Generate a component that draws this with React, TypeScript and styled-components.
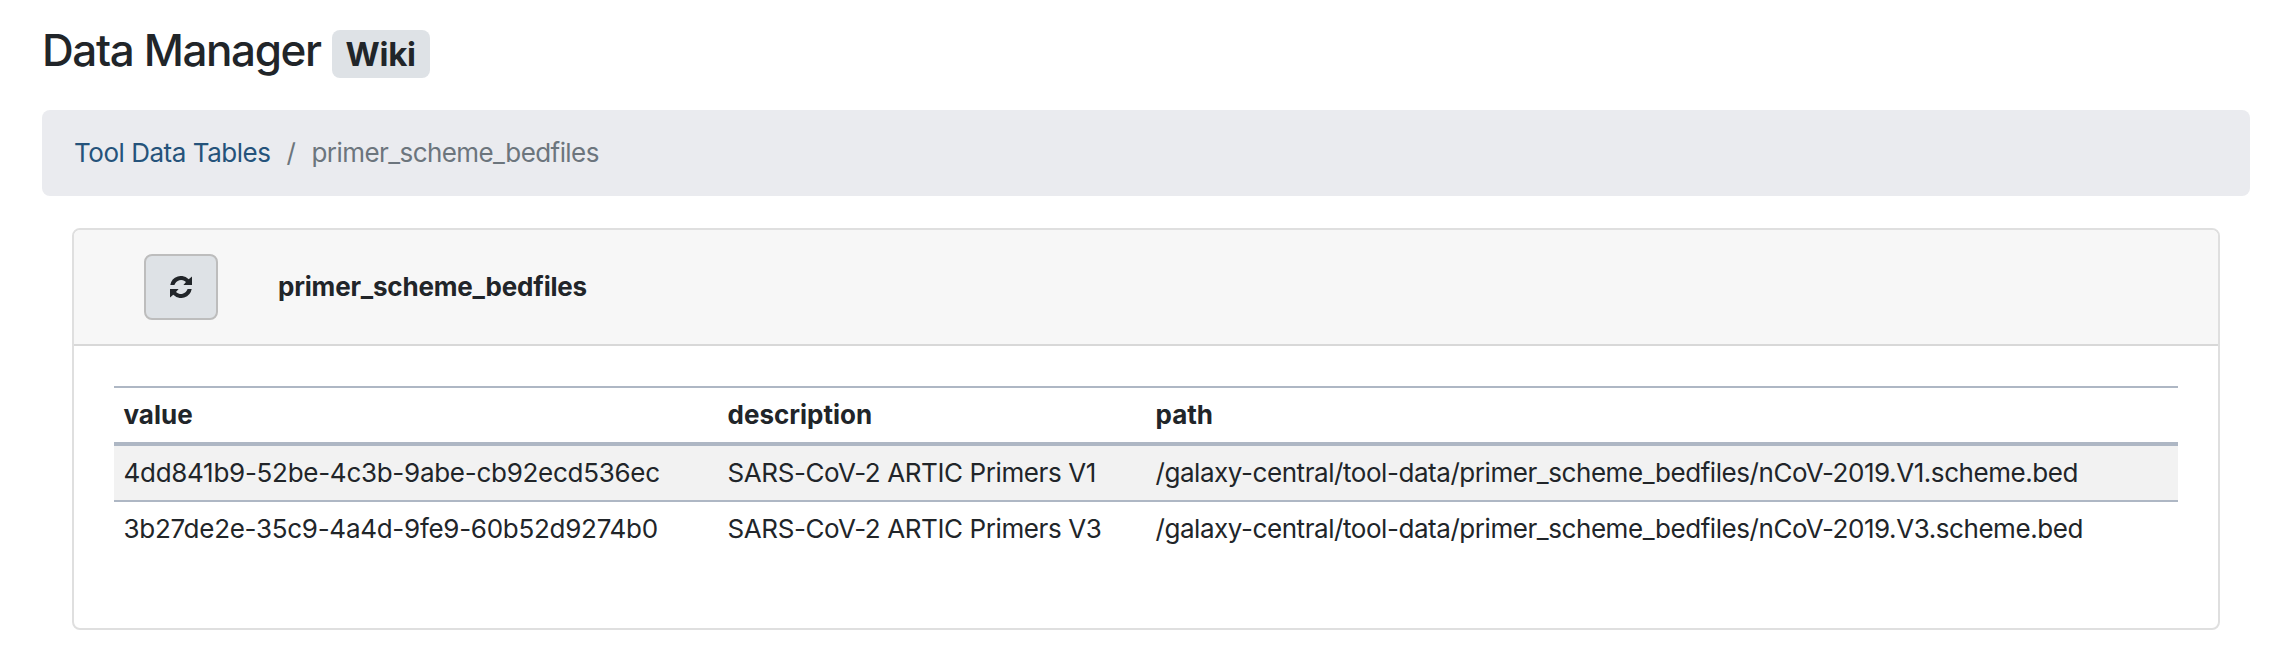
import React from "react";
import styled, { createGlobalStyle } from "styled-components";

const GlobalStyle = createGlobalStyle`
  *, *::before, *::after { box-sizing: border-box; }
  body {
    margin: 0;
    background: #fff;
    color: #212529;
    font-family: Inter, "Liberation Sans", sans-serif;
    font-size: 26px;
    line-height: 38px;
    letter-spacing: -0.4px;
  }
`;

const Page = styled.main`
  padding: 23px 30px 0 42px;
`;

const Heading = styled.h1`
  display: flex;
  align-items: baseline;
  gap: 11px;
  height: 54px;
  margin: 0 0 33px;
  font-size: 44px;
  font-weight: 500;
  line-height: 54px;
  letter-spacing: -1.4px;
  white-space: nowrap;
`;

const WikiBadge = styled.a`
  height: 48px;
  padding: 7px 14px 0;
  border-radius: 8px;
  background: #dee2e6;
  font-size: 33px;
  font-weight: 700;
  line-height: 34px;
  letter-spacing: -0.3px;
`;

const Breadcrumb = styled.nav`
  display: flex;
  align-items: center;
  height: 86px;
  margin-bottom: 32px;
  padding: 0 32px;
  border-radius: 8px;
  background: #eaebef;
  color: #6c757d;
`;

const CrumbLink = styled.a`
  color: #25537b;
  letter-spacing: -0.47px;
`;

const Separator = styled.span`
  padding: 0 16px;
`;

const CurrentCrumb = styled.span`
  letter-spacing: -0.57px;
`;

const Card = styled.section`
  height: 402px;
  margin: 0 30px;
  border: 2px solid #dfdfdf;
  border-radius: 8px;
  overflow: hidden;
`;

const CardHeader = styled.header`
  display: flex;
  align-items: center;
  gap: 60px;
  height: 116px;
  padding: 0 70px;
  border-bottom: 2px solid #d8d8d8;
  background: #f7f7f7;
`;

const RefreshButton = styled.button`
  display: flex;
  align-items: center;
  justify-content: center;
  width: 74px;
  height: 66px;
  padding: 0;
  border: 2px solid #bdbdbd;
  border-radius: 8px;
  background: #dee2e6;
  color: #212529;
`;

const RefreshIcon = styled.svg`
  display: block;
  width: 22px;
  height: 22px;
  fill: currentColor;
`;

const CardTitle = styled.b`
  font-weight: 700;
  letter-spacing: -0.2px;
`;

const Table = styled.table`
  width: 2064px;
  margin: 40px 40px 0;
  border-collapse: separate;
  border-spacing: 0;
  table-layout: fixed;
`;

const Column = styled.col<{ $width: number }>`
  width: ${({ $width }) => $width}px;
`;

const HeaderCell = styled.th`
  height: 60px;
  padding: 0 9.5px;
  border-top: 2px solid #aeb7c4;
  border-bottom: 4px solid #aeb7c4;
  font-weight: 700;
  letter-spacing: 0;
  text-align: left;
`;

const Row = styled.tr<{ $striped: boolean }>`
  background: ${({ $striped }) => ($striped ? "#f2f2f2" : "transparent")};
`;

const Cell = styled.td<{ $tracking: number }>`
  height: 54px;
  padding: 0 9.5px;
  letter-spacing: ${({ $tracking }) => $tracking}px;
  white-space: nowrap;

  tr + tr > & {
    height: 56px;
    border-top: 2px solid #aeb7c4;
  }
`;

const columns = [
  { name: "value", width: 604, tracking: -0.28 },
  { name: "description", width: 428, tracking: -0.4 },
  { name: "path", width: 1032, tracking: -0.44 },
];

const rows = [
  [
    "4dd841b9-52be-4c3b-9abe-cb92ecd536ec",
    "SARS-CoV-2 ARTIC Primers V1",
    "/galaxy-central/tool-data/primer_scheme_bedfiles/nCoV-2019.V1.scheme.bed",
  ],
  [
    "3b27de2e-35c9-4a4d-9fe9-60b52d9274b0",
    "SARS-CoV-2 ARTIC Primers V3",
    "/galaxy-central/tool-data/primer_scheme_bedfiles/nCoV-2019.V3.scheme.bed",
  ],
];

export default function App() {
  return (
    <>
      <GlobalStyle />
      <Page>
        <Heading>
          Data Manager
          <WikiBadge>Wiki</WikiBadge>
        </Heading>
        <Breadcrumb>
          <CrumbLink>Tool Data Tables</CrumbLink>
          <Separator>/</Separator>
          <CurrentCrumb>primer_scheme_bedfiles</CurrentCrumb>
        </Breadcrumb>
        <Card>
          <CardHeader>
            <RefreshButton aria-label="Reload">
              <RefreshIcon viewBox="0 0 22 22">
                <path d="M0.3 9A10.9 10.9 0 0 1 18.7 3.2L22 0.6V9H13.4L16 6.1A7 7 0 0 0 4.4 9Z" />
                <path d="M21.7 13A10.9 10.9 0 0 1 3.3 18.8L0 21.4V13H8.6L6 15.9A7 7 0 0 0 17.6 13Z" />
              </RefreshIcon>
            </RefreshButton>
            <CardTitle>primer_scheme_bedfiles</CardTitle>
          </CardHeader>
          <Table>
            <colgroup>
              {columns.map((column) => (
                <Column key={column.name} $width={column.width} />
              ))}
            </colgroup>
            <thead>
              <tr>
                {columns.map((column) => (
                  <HeaderCell key={column.name}>{column.name}</HeaderCell>
                ))}
              </tr>
            </thead>
            <tbody>
              {rows.map((row, index) => (
                <Row key={row[0]} $striped={index % 2 === 0}>
                  {row.map((value, position) => (
                    <Cell key={value} $tracking={columns[position].tracking}>
                      {value}
                    </Cell>
                  ))}
                </Row>
              ))}
            </tbody>
          </Table>
        </Card>
      </Page>
    </>
  );
}
